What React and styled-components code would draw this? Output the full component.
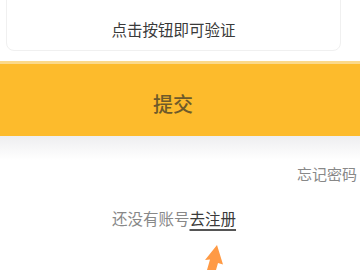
import React from "react";
import styled, { createGlobalStyle } from "styled-components";

const Global = createGlobalStyle`
  html, body { margin: 0; padding: 0; background: #fff; }
  body { font-family: "Noto Sans CJK SC", "Noto Sans", sans-serif; overflow: hidden; }
`;

const Page = styled.div`
  position: relative;
  width: 360px;
  height: 270px;
  overflow: hidden;
  display: flex;
  flex-direction: column;
`;

const Card = styled.div`
  box-sizing: border-box;
  margin: -8px 19px 0 6px;
  height: 59px;
  padding-top: 15px;
  border: 1px solid #f0f0f0;
  border-radius: 8px;
  display: flex;
  align-items: center;
  justify-content: center;
  font-size: 15.5px;
  line-height: 22px;
  color: #3a3a3a;
  font-weight: 400;
`;

const SubmitBar = styled.div`
  box-sizing: border-box;
  margin-top: 10px;
  height: 75px;
  border-top: 3px solid #fbd98a;
  background: #fdbb2c;
  display: flex;
  align-items: center;
  justify-content: center;
  padding: 8px 14px 0 0;
  font-size: 20px;
  line-height: 28px;
  color: #6e5a2a;
  font-weight: 500;
`;

const Shade = styled.div`
  height: 24px;
  background: linear-gradient(#eeeef0, #ffffff);
`;

const ForgotRow = styled.div`
  margin-top: 3px;
  display: flex;
  justify-content: flex-end;
  padding-right: 3px;
  font-size: 15px;
  line-height: 22px;
  color: #888;
`;

const RegisterRow = styled.div`
  margin-top: 22px;
  display: flex;
  justify-content: center;
  padding-right: 12px;
  font-size: 15.5px;
  line-height: 22px;
  color: #888;
`;

const RegisterLink = styled.span`
  color: #3a3a3a;
  font-weight: 400;
  text-decoration: underline;
  text-decoration-color: #555;
  text-decoration-thickness: 1.5px;
  text-underline-offset: 4px;
`;

const Arrow = styled.svg`
  position: absolute;
  left: 200px;
  top: 240px;
`;

export default function App() {
  return (
    <>
      <Global />
      <Page>
        <Card>点击按钮即可验证</Card>
        <SubmitBar>提交</SubmitBar>
        <Shade />
        <ForgotRow>忘记密码</ForgotRow>
        <RegisterRow>
          还没有账号<RegisterLink>去注册</RegisterLink>
        </RegisterRow>
        <Arrow width="30" height="30" viewBox="0 0 30 30">
          <polygon
            points="17,5 5,20 10,19.5 7,30 16,30 18,23 23,24.5"
            fill="#ff9a45"
          />
        </Arrow>
      </Page>
    </>
  );
}
